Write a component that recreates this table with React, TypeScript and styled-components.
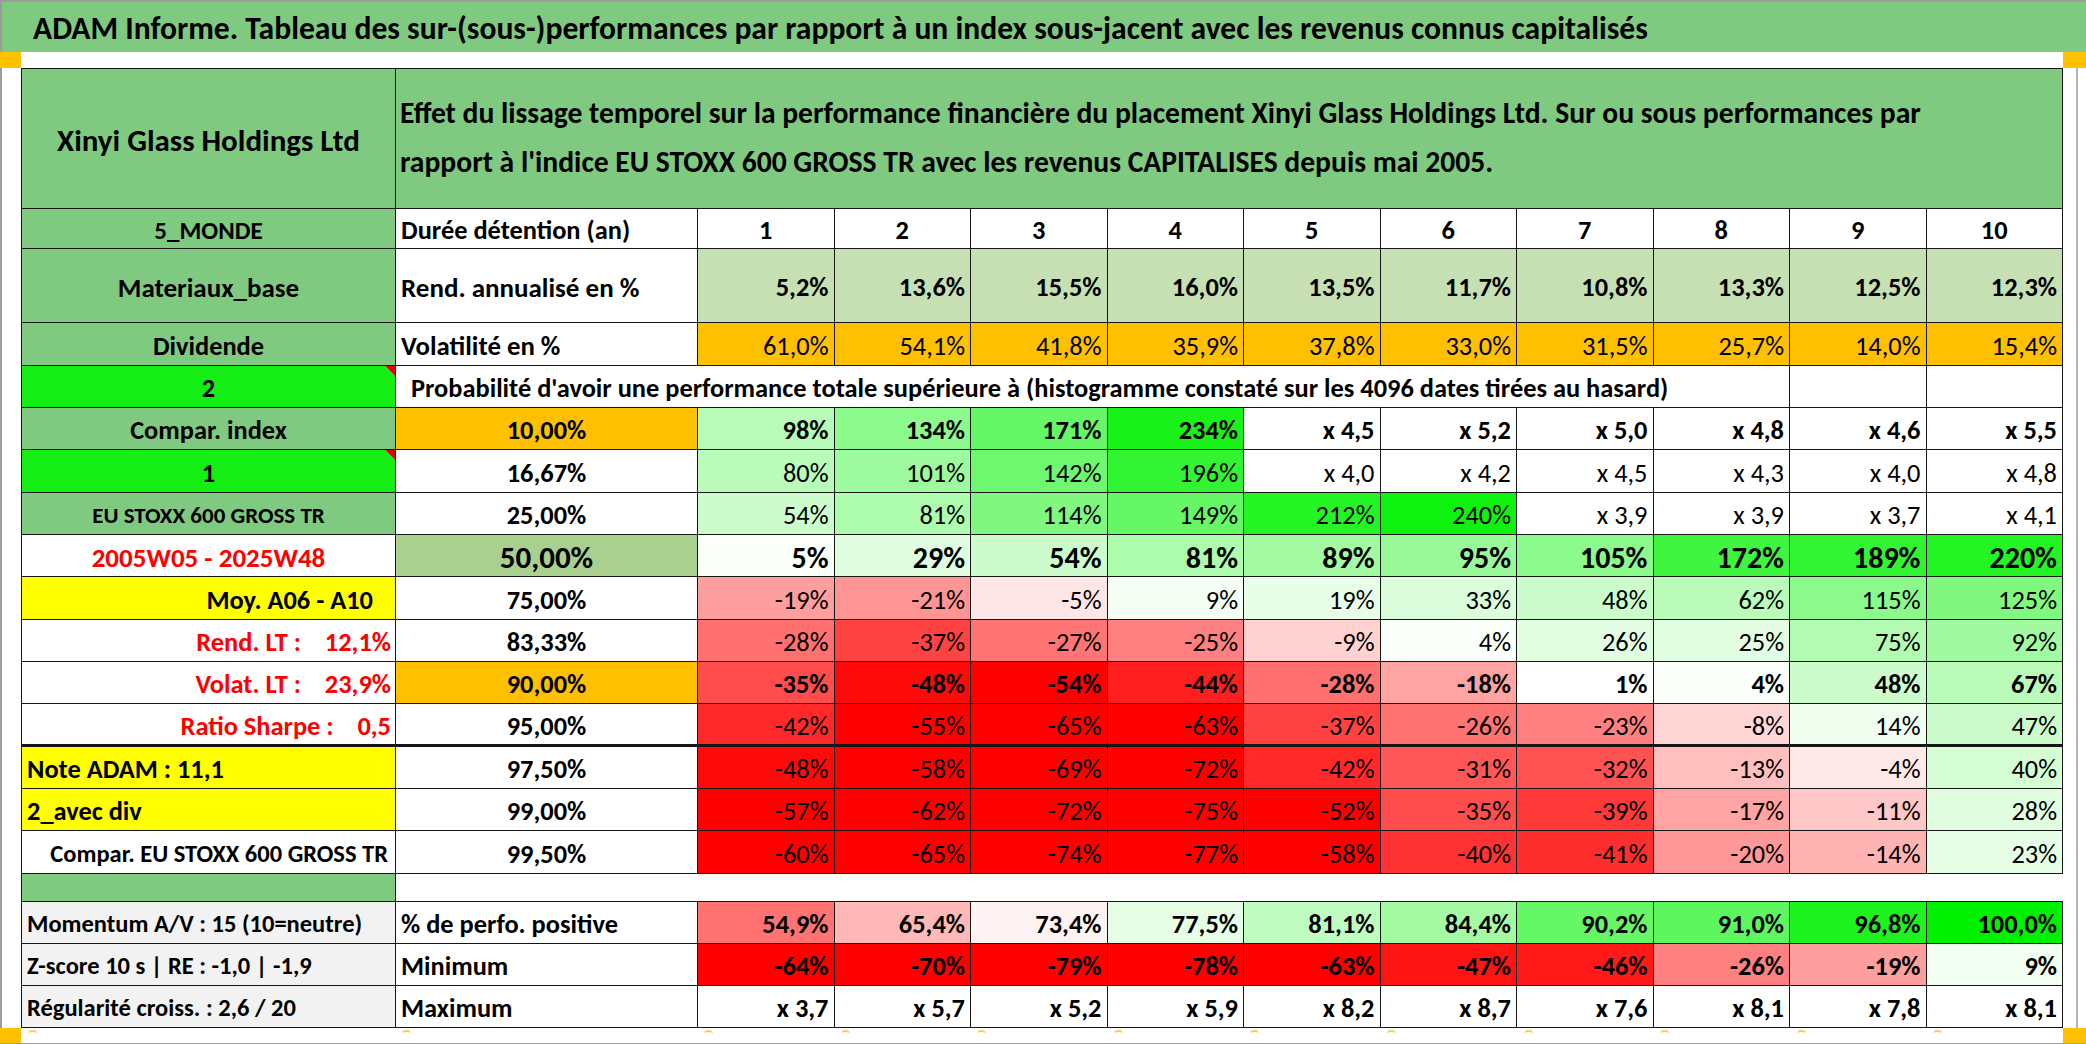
import React from 'react';
import styled, { createGlobalStyle } from 'styled-components';

const GREEN = '#80c980';
const LIME = '#14ee14';
const ORANGE = '#ffc000';
const YELLOW = '#ffff00';
const PALE = '#c6e0b4';
const MID = '#a9d08e';
const GREY = '#f2f2f2';
const RED = '#ff0000';
const LINE = '#161616';

const GlobalStyle = createGlobalStyle`
  html, body { margin: 0; padding: 0; background: #fff; }
  body { font-family: Carlito, "Liberation Sans", sans-serif; color: #000; }
`;

// conditional-format colour: -1 = full red, 0 = white, 1 = full green
const heat = (h: number) => {
  if (h >= 0) {
    const c = Math.round(255 * (1 - h));
    return `rgb(${c}, ${Math.round(255 - 14 * h)}, ${c})`;
  }
  const c = Math.round(255 * (1 + h));
  return `rgb(255, ${c}, ${c})`;
};

type Align = 'left' | 'center' | 'right';

interface CellProps {
  $bg?: string;
  $align?: Align;
  $bold?: boolean;
  $size?: number;
  $color?: string;
  $span?: number;
  $thick?: boolean;
  $pad?: number;
}

const Page = styled.div`
  width: 2086px;
  height: 1044px;
  display: flex;
  flex-direction: column;
  overflow: hidden;
  background: #fff;
`;

const TitleBar = styled.div`
  height: 52px;
  box-sizing: border-box;
  border-top: 2px solid #9c9c9c;
  border-left: 2px solid #9c9c9c;
  background: ${GREEN};
  display: flex;
  align-items: center;
  padding: 2px 0 0 31px;
  font-size: 31.6px;
  font-weight: 700;
  white-space: nowrap;
`;

const Strip = styled.div<{ $bottom?: boolean }>`
  height: ${(p) => (p.$bottom ? 15 : 16)}px;
  display: flex;
  justify-content: space-between;
  align-items: stretch;
  border-bottom: ${(p) => (p.$bottom ? '1px solid #9c9c9c' : 'none')};
`;

const Handle = styled.div<{ $w: number }>`
  width: ${(p) => p.$w}px;
  background: ${ORANGE};
  flex: none;
`;

const MarkRow = styled.div`
  width: 2042px;
  display: grid;
  grid-template-columns: 374px 302px repeat(10, 1fr);
`;

const Mark = styled.span`
  display: block;
  width: 9px;
  height: 5px;
  margin: 2px 0 0 7px;
  border-top: 2px solid #f3cf55;
  border-radius: 50% 50% 0 0;
`;

const Sheet = styled.div`
  display: flex;
  width: 2078px;
  box-sizing: border-box;
  border-left: 2px solid #9c9c9c;
  border-right: 2px solid #b4b4b4;
  padding-left: 19px;
`;

const Table = styled.div`
  display: grid;
  width: 2042px;
  box-sizing: border-box;
  grid-template-columns: 374px 302px repeat(10, 1fr);
  grid-template-rows:
    140px 40px 74px 43px
    42px 42px 43px 42px 42px 43px 42px 42px 43px 42px 42px 43px
    28px 42px 42px 42px;
  border-top: 1px solid ${LINE};
  border-left: 1px solid ${LINE};
`;

const Cell = styled.div<CellProps>`
  box-sizing: border-box;
  display: flex;
  align-items: center;
  justify-content: ${(p) =>
    p.$align === 'left' ? 'flex-start' : p.$align === 'right' ? 'flex-end' : 'center'};
  padding: 4px ${(p) => p.$pad ?? 5}px 0;
  grid-column: ${(p) => (p.$span ? `span ${p.$span}` : 'auto')};
  background: ${(p) => p.$bg ?? '#fff'};
  color: ${(p) => p.$color ?? '#000'};
  font-size: ${(p) => p.$size ?? 26.4}px;
  font-weight: ${(p) => (p.$bold ? 700 : 400)};
  line-height: 1;
  white-space: pre;
  overflow: hidden;
  border-right: 1px solid ${LINE};
  border-bottom: ${(p) => (p.$thick ? 3 : 1)}px solid ${LINE};
`;

const HeaderText = styled(Cell)`
  display: block;
  padding: 20px 0 0 4px;
  font-size: 29.6px;
  line-height: 49px;
  white-space: normal;
`;

const FlagCell = styled(Cell)`
  background: linear-gradient(225deg, #e00000 0 7px, transparent 7px), ${LIME};
`;

const NoteText = styled(Cell)`
  padding-left: 15px;
`;

const BlankCell = styled.div`
  grid-column: 2 / -1;
  border-bottom: 1px solid ${LINE};
`;

type Val = [string, number];

const ValueCells: React.FC<{ cells: Val[]; bold?: boolean; size?: number; thick?: boolean }> = ({
  cells,
  bold,
  size,
  thick,
}) => (
  <>
    {cells.map(([t, h], i) => (
      <Cell key={i} $align="right" $bg={heat(h)} $bold={bold} $size={size} $thick={thick}>
        {t}
      </Cell>
    ))}
  </>
);

interface LabelSpec {
  text: string;
  bg?: string;
  align?: Align;
  color?: string;
  size?: number;
  pad?: number;
  flag?: boolean;
}

interface BodyRow {
  label: LabelSpec;
  level: string;
  levelBg?: string;
  levelSize?: number;
  bold?: boolean;
  size?: number;
  thick?: boolean;
  cells: Val[];
}

const x = (s: string): Val => [s, 0];

const bodyRows: BodyRow[] = [
  {
    label: { text: 'Compar. index', bg: GREEN },
    level: '10,00%',
    levelBg: ORANGE,
    bold: true,
    cells: [['98%', 0.28], ['134%', 0.45], ['171%', 0.6], ['234%', 0.9], x('x 4,5'), x('x 5,2'), x('x 5,0'), x('x 4,8'), x('x 4,6'), x('x 5,5')],
  },
  {
    label: { text: '1', flag: true },
    level: '16,67%',
    cells: [['80%', 0.27], ['101%', 0.38], ['142%', 0.56], ['196%', 0.8], x('x 4,0'), x('x 4,2'), x('x 4,5'), x('x 4,3'), x('x 4,0'), x('x 4,8')],
  },
  {
    label: { text: 'EU STOXX 600 GROSS TR', bg: GREEN, size: 23 },
    level: '25,00%',
    cells: [['54%', 0.2], ['81%', 0.32], ['114%', 0.5], ['149%', 0.6], ['212%', 0.86], ['240%', 0.94], x('x 3,9'), x('x 3,9'), x('x 3,7'), x('x 4,1')],
  },
  {
    label: { text: '2005W05 - 2025W48', color: RED, size: 27 },
    level: '50,00%',
    levelBg: MID,
    levelSize: 31,
    bold: true,
    size: 30,
    cells: [['5%', 0.02], ['29%', 0.12], ['54%', 0.2], ['81%', 0.32], ['89%', 0.36], ['95%', 0.4], ['105%', 0.45], ['172%', 0.75], ['189%', 0.8], ['220%', 0.86]],
  },
  {
    label: { text: 'Moy. A06 - A10', bg: YELLOW, align: 'right', pad: 22 },
    level: '75,00%',
    cells: [['-19%', -0.38], ['-21%', -0.42], ['-5%', -0.1], ['9%', 0.04], ['19%', 0.09], ['33%', 0.14], ['48%', 0.2], ['62%', 0.27], ['115%', 0.45], ['125%', 0.5]],
  },
  {
    label: { text: 'Rend. LT :    12,1%', color: RED, align: 'right', pad: 4 },
    level: '83,33%',
    cells: [['-28%', -0.56], ['-37%', -0.74], ['-27%', -0.54], ['-25%', -0.5], ['-9%', -0.18], ['4%', 0.02], ['26%', 0.11], ['25%', 0.11], ['75%', 0.3], ['92%', 0.37]],
  },
  {
    label: { text: 'Volat. LT :    23,9%', color: RED, align: 'right', pad: 4 },
    level: '90,00%',
    levelBg: ORANGE,
    bold: true,
    cells: [['-35%', -0.7], ['-48%', -0.96], ['-54%', -1], ['-44%', -0.88], ['-28%', -0.56], ['-18%', -0.36], ['1%', 0], ['4%', 0.02], ['48%', 0.2], ['67%', 0.27]],
  },
  {
    label: { text: 'Ratio Sharpe :    0,5', color: RED, align: 'right', pad: 4 },
    level: '95,00%',
    thick: true,
    cells: [['-42%', -0.84], ['-55%', -1], ['-65%', -1], ['-63%', -1], ['-37%', -0.74], ['-26%', -0.55], ['-23%', -0.5], ['-8%', -0.16], ['14%', 0.06], ['47%', 0.2]],
  },
  {
    label: { text: 'Note ADAM : 11,1', bg: YELLOW, align: 'left' },
    level: '97,50%',
    cells: [['-48%', -0.96], ['-58%', -1], ['-69%', -1], ['-72%', -1], ['-42%', -0.84], ['-31%', -0.66], ['-32%', -0.68], ['-13%', -0.25], ['-4%', -0.09], ['40%', 0.17]],
  },
  {
    label: { text: '2_avec div', bg: YELLOW, align: 'left' },
    level: '99,00%',
    cells: [['-57%', -1], ['-62%', -1], ['-72%', -1], ['-75%', -1], ['-52%', -1], ['-35%', -0.7], ['-39%', -0.78], ['-17%', -0.36], ['-11%', -0.22], ['28%', 0.12]],
  },
  {
    label: { text: 'Compar. EU STOXX 600 GROSS TR', align: 'right', size: 24.5, pad: 7 },
    level: '99,50%',
    cells: [['-60%', -1], ['-65%', -1], ['-74%', -1], ['-77%', -1], ['-58%', -1], ['-40%', -0.8], ['-41%', -0.82], ['-20%', -0.4], ['-14%', -0.3], ['23%', 0.1]],
  },
];

const rend = ['5,2%', '13,6%', '15,5%', '16,0%', '13,5%', '11,7%', '10,8%', '13,3%', '12,5%', '12,3%'];
const vola = ['61,0%', '54,1%', '41,8%', '35,9%', '37,8%', '33,0%', '31,5%', '25,7%', '14,0%', '15,4%'];

const positive: Val[] = [['54,9%', -0.55], ['65,4%', -0.28], ['73,4%', -0.05], ['77,5%', 0.1], ['81,1%', 0.25], ['84,4%', 0.36], ['90,2%', 0.6], ['91,0%', 0.63], ['96,8%', 0.88], ['100,0%', 1]];
const minimum: Val[] = [['-64%', -1], ['-70%', -1], ['-79%', -1], ['-78%', -1], ['-63%', -1], ['-47%', -0.92], ['-46%', -0.9], ['-26%', -0.5], ['-19%', -0.38], ['9%', 0.05]];
const maximum: Val[] = ['x 3,7', 'x 5,7', 'x 5,2', 'x 5,9', 'x 8,2', 'x 8,7', 'x 7,6', 'x 8,1', 'x 7,8', 'x 8,1'].map(x);

const Label: React.FC<{ spec: LabelSpec; thick?: boolean }> = ({ spec, thick }) => {
  const Comp = spec.flag ? FlagCell : Cell;
  return (
    <Comp
      $bold
      $bg={spec.bg}
      $align={spec.align ?? 'center'}
      $color={spec.color}
      $size={spec.size}
      $pad={spec.pad}
      $thick={thick}
    >
      {spec.text}
    </Comp>
  );
};

const years = Array.from({ length: 10 }, (_, i) => String(i + 1));

export default function App() {
  return (
    <Page>
      <GlobalStyle />
      <TitleBar>
        ADAM Informe. Tableau des sur-(sous-)performances par rapport à un index sous-jacent avec les revenus connus capitalisés
      </TitleBar>
      <Strip>
        <Handle $w={21} />
        <Handle $w={23} />
      </Strip>
      <Sheet>
        <Table>
          <Cell $bg={GREEN} $bold $size={31}>
            Xinyi Glass Holdings Ltd
          </Cell>
          <HeaderText $span={11} $bg={GREEN} $bold>
            Effet du lissage temporel sur la performance financière du placement Xinyi Glass Holdings Ltd. Sur ou sous performances par
            <br />
            rapport à l'indice EU STOXX 600 GROSS TR avec les revenus CAPITALISES depuis mai 2005.
          </HeaderText>

          <Cell $bg={GREEN} $bold $size={25}>
            5_MONDE
          </Cell>
          <Cell $align="left" $bold>
            Durée détention (an)
          </Cell>
          {years.map((y) => (
            <Cell key={y} $bold>
              {y}
            </Cell>
          ))}

          <Cell $bg={GREEN} $bold $size={27}>
            Materiaux_base
          </Cell>
          <Cell $align="left" $bold $size={27}>
            Rend. annualisé en %
          </Cell>
          {rend.map((v) => (
            <Cell key={v} $align="right" $bg={PALE} $bold>
              {v}
            </Cell>
          ))}

          <Cell $bg={GREEN} $bold>
            Dividende
          </Cell>
          <Cell $align="left" $bold $size={26.8}>
            Volatilité en %
          </Cell>
          {vola.map((v) => (
            <Cell key={v} $align="right" $bg={ORANGE}>
              {v}
            </Cell>
          ))}

          <FlagCell $bold>2</FlagCell>
          <NoteText $span={9} $align="left" $bold>
            Probabilité d'avoir une performance totale supérieure à (histogramme constaté sur les 4096 dates tirées au hasard)
          </NoteText>
          <Cell />
          <Cell />

          {bodyRows.map((row) => (
            <React.Fragment key={row.level}>
              <Label spec={row.label} thick={row.thick} />
              <Cell $bg={row.levelBg} $bold $size={row.levelSize} $thick={row.thick}>
                {row.level}
              </Cell>
              <ValueCells cells={row.cells} bold={row.bold} size={row.size} thick={row.thick} />
            </React.Fragment>
          ))}

          <Cell $bg={GREEN} />
          <BlankCell />

          <Cell $bg={GREY} $align="left" $bold $size={24.5}>
            Momentum A/V : 15 (10=neutre)
          </Cell>
          <Cell $align="left" $bold>
            % de perfo. positive
          </Cell>
          <ValueCells cells={positive} bold />

          <Cell $bg={GREY} $align="left" $bold $size={24.5}>
            Z-score 10 s | RE : -1,0 | -1,9
          </Cell>
          <Cell $align="left" $bold>
            Minimum
          </Cell>
          <ValueCells cells={minimum} bold />

          <Cell $bg={GREY} $align="left" $bold $size={24.5}>
            Régularité croiss. : 2,6 / 20
          </Cell>
          <Cell $align="left" $bold>
            Maximum
          </Cell>
          <ValueCells cells={maximum} bold />
        </Table>
      </Sheet>
      <Strip $bottom>
        <Handle $w={21} />
        <MarkRow>
          {Array.from({ length: 12 }, (_, i) => (
            <Mark key={i} />
          ))}
        </MarkRow>
        <Handle $w={23} />
      </Strip>
    </Page>
  );
}
